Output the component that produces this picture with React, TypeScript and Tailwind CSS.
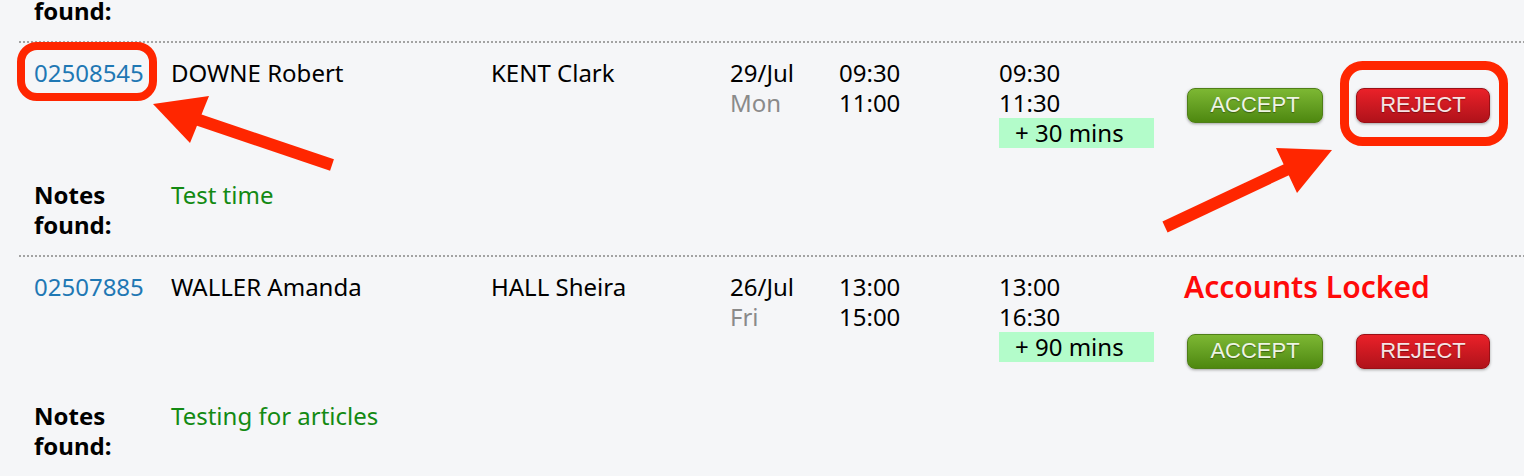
import React from "react";

type Booking = {
  id: string;
  driver: string;
  agent: string;
  date: string;
  day: string;
  bookedFrom: string;
  bookedTo: string;
  actualFrom: string;
  actualTo: string;
  extra: string;
  locked: boolean;
  notes: string;
};

const bookings: Booking[] = [
  {
    id: "02508545",
    driver: "DOWNE Robert",
    agent: "KENT Clark",
    date: "29/Jul",
    day: "Mon",
    bookedFrom: "09:30",
    bookedTo: "11:00",
    actualFrom: "09:30",
    actualTo: "11:30",
    extra: "+ 30 mins",
    locked: false,
    notes: "Test time",
  },
  {
    id: "02507885",
    driver: "WALLER Amanda",
    agent: "HALL Sheira",
    date: "26/Jul",
    day: "Fri",
    bookedFrom: "13:00",
    bookedTo: "15:00",
    actualFrom: "13:00",
    actualTo: "16:30",
    extra: "+ 90 mins",
    locked: true,
    notes: "Testing for articles",
  },
];

function Separator() {
  return (
    <div className="ml-[19px] h-[2px] bg-[linear-gradient(to_right,#a3a3a3_50%,transparent_50%)] bg-[length:4px_2px]" />
  );
}

function ActionButton({ kind }: { kind: "accept" | "reject" }) {
  const accept = kind === "accept";
  return (
    <button
      type="button"
      className={
        accept
          ? "flex h-[35px] w-[136px] items-center justify-center rounded-[8px] border border-[#4f7f18] bg-gradient-to-b from-[#7db833] to-[#4e880f] pb-[2px] font-['Liberation_Sans',sans-serif] text-[22px] text-[#eef4e4] shadow-[0_1px_3px_rgba(0,0,0,0.35)] [text-shadow:0_1px_1px_rgba(0,0,0,0.35)]"
          : "flex h-[35px] w-[134px] items-center justify-center rounded-[8px] border border-[#9a1016] bg-gradient-to-b from-[#ea2129] to-[#b0121a] pb-[2px] font-['Liberation_Sans',sans-serif] text-[22px] text-[#f6e4e4] shadow-[0_1px_3px_rgba(0,0,0,0.35)] [text-shadow:0_1px_1px_rgba(0,0,0,0.35)]"
      }
    >
      {accept ? "ACCEPT" : "REJECT"}
    </button>
  );
}

function BookingRow({ b }: { b: Booking }) {
  return (
    <div>
      <Separator />
      <div className="grid grid-cols-[137px_320px_239px_109px_160px_185px_1fr] pl-[34px] pt-[15px]">
        <a href="#" className="text-[#1f78b4]">
          {b.id}
        </a>
        <div>{b.driver}</div>
        <div>{b.agent}</div>
        <div>
          <div>{b.date}</div>
          <div className="text-[#8a8a8a]">{b.day}</div>
        </div>
        <div>
          <div>{b.bookedFrom}</div>
          <div>{b.bookedTo}</div>
        </div>
        <div>
          <div>{b.actualFrom}</div>
          <div>{b.actualTo}</div>
          <div className="w-[155px] bg-[#b3fcca] pl-[16px]">{b.extra}</div>
        </div>
        <div className="flex flex-col">
          {b.locked ? (
            <div className="h-[62px] text-[30px] font-semibold leading-[30px] text-[#ff0a0a]">
              Accounts Locked
            </div>
          ) : (
            <div className="h-[30px]" />
          )}
          <div className="flex gap-[33px] pl-[3px]">
            <ActionButton kind="accept" />
            <ActionButton kind="reject" />
          </div>
        </div>
      </div>
      <div className="grid grid-cols-[137px_1fr] pb-[15px] pl-[34px] pt-[32px]">
        <div className="font-bold">
          Notes
          <br />
          found:
        </div>
        <div className="text-[#138a13]">{b.notes}</div>
      </div>
    </div>
  );
}

function Annotations() {
  return (
    <svg
      className="pointer-events-none absolute left-0 top-0"
      width="1524"
      height="476"
      viewBox="0 0 1524 476"
    >
      <rect x="21" y="46" width="132" height="51" rx="16" fill="none" stroke="#ff2600" strokeWidth="8" />
      <rect x="1344.5" y="65.5" width="159" height="76" rx="18" fill="none" stroke="#ff2600" strokeWidth="9" />
      <line x1="332" y1="165" x2="196" y2="119" stroke="#ff2600" strokeWidth="12" />
      <polygon points="153,104 209,96 190,143" fill="#ff2600" />
      <line x1="1165" y1="227" x2="1288" y2="169" stroke="#ff2600" strokeWidth="12" />
      <polygon points="1332,150 1276,148 1297,193" fill="#ff2600" />
    </svg>
  );
}

export default function App() {
  return (
    <div className="relative h-[476px] w-[1524px] overflow-hidden bg-[#f5f6f8] font-['Noto_Sans',sans-serif] text-[24px] leading-[30px] text-black">
      <div className="-mt-[4px] pb-[15px] pl-[34px] font-bold">found:</div>
      {bookings.map((b) => (
        <BookingRow key={b.id} b={b} />
      ))}
      <Annotations />
    </div>
  );
}
